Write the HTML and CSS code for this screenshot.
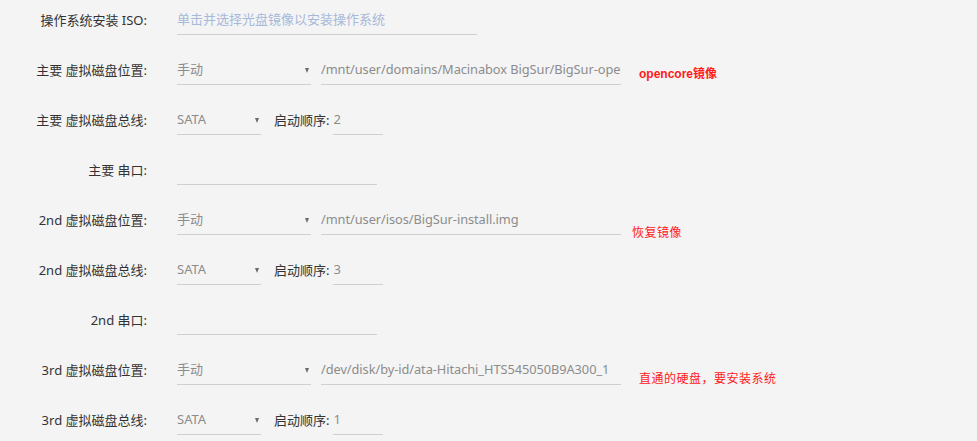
FILE: index.html
```html
<!DOCTYPE html>
<html lang="zh">
<head>
<meta charset="utf-8">
<title>VM</title>
<link rel="stylesheet" href="styles.css">
</head>
<body>
<div class="form">
  <div class="row">
    <div class="label">操作系统安装 ISO:</div>
    <div class="ctrl">
      <div class="input w300 placeholder">单击并选择光盘镜像以安装操作系统</div>
    </div>
  </div>

  <div class="row">
    <div class="label">主要 虚拟磁盘位置:</div>
    <div class="ctrl">
      <div class="select w134"><span>手动</span><i class="arrow"></i></div>
      <div class="input w300 path">/mnt/user/domains/Macinabox BigSur/BigSur-ope</div>
      <div class="note bold n1">opencore镜像</div>
    </div>
  </div>

  <div class="row">
    <div class="label">主要 虚拟磁盘总线:</div>
    <div class="ctrl">
      <div class="select w84"><span>SATA</span><i class="arrow"></i></div>
      <div class="sublabel">启动顺序:</div>
      <div class="input w50">2</div>
    </div>
  </div>

  <div class="row">
    <div class="label">主要 串口:</div>
    <div class="ctrl">
      <div class="input w200"></div>
    </div>
  </div>

  <div class="row">
    <div class="label">2nd 虚拟磁盘位置:</div>
    <div class="ctrl">
      <div class="select w134"><span>手动</span><i class="arrow"></i></div>
      <div class="input w300 path">/mnt/user/isos/BigSur-install.img</div>
      <div class="note n2">恢复镜像</div>
    </div>
  </div>

  <div class="row">
    <div class="label">2nd 虚拟磁盘总线:</div>
    <div class="ctrl">
      <div class="select w84"><span>SATA</span><i class="arrow"></i></div>
      <div class="sublabel">启动顺序:</div>
      <div class="input w50">3</div>
    </div>
  </div>

  <div class="row">
    <div class="label">2nd 串口:</div>
    <div class="ctrl">
      <div class="input w200"></div>
    </div>
  </div>

  <div class="row">
    <div class="label">3rd 虚拟磁盘位置:</div>
    <div class="ctrl">
      <div class="select w134"><span>手动</span><i class="arrow"></i></div>
      <div class="input w300 path">/dev/disk/by-id/ata-Hitachi_HTS545050B9A300_1</div>
      <div class="note n3">直通的硬盘，要安装系统</div>
    </div>
  </div>

  <div class="row">
    <div class="label">3rd 虚拟磁盘总线:</div>
    <div class="ctrl">
      <div class="select w84"><span>SATA</span><i class="arrow"></i></div>
      <div class="sublabel">启动顺序:</div>
      <div class="input w50">1</div>
    </div>
  </div>
</div>
</body>
</html>
```

FILE: styles.css
```css
html, body {
  margin: 0;
  padding: 0;
  background: #f4f4f4;
  overflow: hidden;
}

body {
  font-family: "Noto Sans", "Noto Sans CJK SC", sans-serif;
  font-size: 13px;
  color: #333;
}

.form {
  padding-top: 5px;
  display: flex;
  flex-direction: column;
  gap: 20px;
}

.row {
  display: grid;
  grid-template-columns: 147px 1fr;
  column-gap: 30px;
  height: 30px;
}

.label {
  text-align: right;
  line-height: 30px;
  white-space: nowrap;
  color: #333;
}

.ctrl {
  display: flex;
  align-items: flex-start;
}

.input,
.select {
  box-sizing: border-box;
  height: 30px;
  line-height: 29px;
  border-bottom: 1px solid #cfcfcf;
  color: #8c8c8c;
  white-space: nowrap;
  overflow: hidden;
}

.placeholder {
  color: #a7b9da;
}

.w300 { width: 300px; }
.w200 { width: 200px; }
.w134 { width: 134px; }
.w84 { width: 84px; }
.w50 { width: 50px; }

.select {
  display: flex;
  align-items: center;
  justify-content: space-between;
  padding-right: 2px;
}

.arrow {
  display: block;
  width: 0;
  height: 0;
  border-left: 2.5px solid transparent;
  border-right: 2.5px solid transparent;
  border-top: 5px solid #6a6a6a;
  margin-top: 1px;
}

.path {
  margin-left: 10px;
  font-size: 12.8px;
  letter-spacing: -0.06px;
}

.sublabel {
  margin-left: 13px;
  margin-right: 4px;
  line-height: 30px;
  color: #333;
  white-space: nowrap;
}

.note {
  font-family: "Liberation Sans", "Noto Sans CJK SC", sans-serif;
  font-size: 12px;
  line-height: 16px;
  color: #ff1a1a;
  white-space: nowrap;
}

.bold {
  font-weight: bold;
}

.n1 { margin-left: 18px; margin-top: 11px; }
.n2 { margin-left: 11px; margin-top: 20px; letter-spacing: 0.5px; }
.n3 { margin-left: 18px; margin-top: 16px; letter-spacing: 0.5px; }
```
